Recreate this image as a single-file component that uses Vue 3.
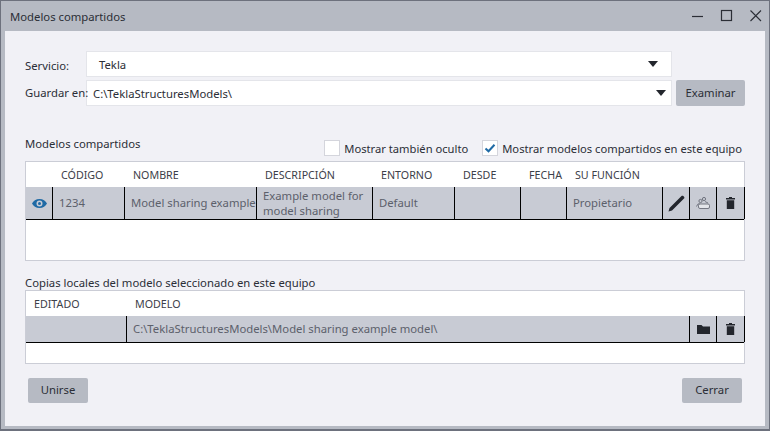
<script setup>
const columns = [
  { label: '', width: 27 },
  { label: 'CÓDIGO', width: 72 },
  { label: 'NOMBRE', width: 132 },
  { label: 'DESCRIPCIÓN', width: 116 },
  { label: 'ENTORNO', width: 82 },
  { label: 'DESDE', width: 66 },
  { label: 'FECHA', width: 46 },
  { label: 'SU FUNCIÓN', width: 96 },
  { label: '', width: 27 },
  { label: '', width: 27 },
  { label: '', width: 28 },
]
</script>

<template>
  <div class="window">
    <header class="titlebar">
      <span class="title">Modelos compartidos</span>
      <div class="controls">
        <svg width="14" height="14" viewBox="0 0 14 14"><path d="M1 7.500h11" stroke="#2b2e36" stroke-width="1.200" fill="none" /></svg>
        <svg width="14" height="14" viewBox="0 0 14 14"><rect x="1.500" y="1.500" width="10" height="10" stroke="#2b2e36" stroke-width="1.200" fill="none" /></svg>
        <svg width="14" height="14" viewBox="0 0 14 14"><path d="M1.500 1.500l10.500 10.500M12 1.500L1.500 12" stroke="#2b2e36" stroke-width="1.100" fill="none" /></svg>
      </div>
    </header>

    <main class="body">
      <div class="form-row first">
        <label>Servicio:</label>
        <div class="select service"><span>Tekla</span><i class="caret"></i></div>
      </div>
      <div class="form-row second">
        <label>Guardar en:</label>
        <div class="select path"><span>C:\TeklaStructuresModels\</span><i class="caret"></i></div>
        <button class="btn browse">Examinar</button>
      </div>

      <div class="section-head">
        <span class="section-title">Modelos compartidos</span>
        <div class="checks">
          <span class="check"><i class="box"></i>Mostrar también oculto</span>
          <span class="check">
            <i class="box">
              <svg width="14" height="14" viewBox="0 0 14 14"><path d="M2.500 7.500l3 2.800L11.500 3.800" stroke="#1f6aa5" stroke-width="2" fill="none" /></svg>
            </i>Mostrar modelos compartidos en este equipo
          </span>
        </div>
      </div>

      <section class="table shared">
        <div class="thead">
          <span v-for="(c, i) in columns" :key="i" class="th" :style="{ width: c.width + 'px' }">{{ c.label }}</span>
        </div>
        <div class="tr">
          <span class="td icon w27">
            <svg width="15" height="9" viewBox="0 0 15 9">
              <path fill-rule="evenodd" d="M7.500 0C11 0 13.700 2.100 15 4.500 13.700 6.900 11 9 7.500 9S1.300 6.900 0 4.500C1.300 2.100 4 0 7.500 0ZM7.500 1.500a3 3 0 1 0 0 6 3 3 0 0 0 0-6ZM7.500 3a1.500 1.500 0 1 1 0 3 1.500 1.500 0 0 1 0-3Z" fill="#1f6aa5" />
            </svg>
          </span>
          <span class="td w72 raised">1234</span>
          <span class="td w132 raised">Model sharing example</span>
          <span class="td w116 desc">Example model for model sharing</span>
          <span class="td w82 raised">Default</span>
          <span class="td w66"></span>
          <span class="td w46"></span>
          <span class="td w96 raised">Propietario</span>
          <span class="td icon w27">
            <svg width="17" height="17" viewBox="0 0 17 17">
              <path d="M0.500 16.500L1.500 13 13.500 1C14 0.500 14.800 0.500 15.300 1L16 1.700C16.500 2.200 16.500 3 16 3.500L4 15.500Z" fill="#23262d" />
            </svg>
          </span>
          <span class="td icon w27">
            <svg width="14" height="12" viewBox="0 0 14 12">
              <circle cx="4.500" cy="4" r="1.600" stroke="#5c606b" stroke-width="0.800" fill="none" />
              <circle cx="8" cy="2" r="1.600" stroke="#5c606b" stroke-width="0.800" fill="none" />
              <path d="M0.500 9.500Q1.500 6.500 3.500 6.500M9 4.500L12 6" stroke="#5c606b" stroke-width="0.800" fill="none" />
              <rect x="2.500" y="7" width="11" height="4.500" rx="1.500" stroke="#5c606b" stroke-width="0.800" fill="#e3e5ea" />
            </svg>
          </span>
          <span class="td icon w28 last">
            <svg width="9" height="12" viewBox="0 0 9 12">
              <path d="M3 0h3v1h3v1.500H0V1h3ZM0.800 3.300h7.400V12H0.800Z" fill="#23262d" />
            </svg>
          </span>
        </div>
      </section>

      <div class="section-title local-title">Copias locales del modelo seleccionado en este equipo</div>

      <section class="table local">
        <div class="thead short">
          <span class="th w101">EDITADO</span>
          <span class="th">MODELO</span>
        </div>
        <div class="tr short-row">
          <span class="td w101"></span>
          <span class="td w563 raised">C:\TeklaStructuresModels\Model sharing example model\</span>
          <span class="td icon w27">
            <svg width="13" height="9" viewBox="0 0 13 9">
              <path d="M0 0h4.500L6 1.500h7V9H0Z" fill="#23262d" />
            </svg>
          </span>
          <span class="td icon w28 last">
            <svg width="9" height="12" viewBox="0 0 9 12">
              <path d="M3 0h3v1h3v1.500H0V1h3ZM0.800 3.300h7.400V12H0.800Z" fill="#23262d" />
            </svg>
          </span>
        </div>
      </section>

      <footer class="footer">
        <button class="btn action">Unirse</button>
        <button class="btn action">Cerrar</button>
      </footer>
    </main>
  </div>
</template>

<style>
html, body { margin: 0; background: #b6bac3; }
</style>

<style scoped>
.window {
  box-sizing: border-box;
  width: 770px;
  height: 431px;
  background: #b6bac3;
  border: 1px solid #6d717d;
  border-width: 1px 1px 2px 1px;
  font-family: "Noto Sans", "Open Sans", sans-serif;
  font-size: 11.300px;
  color: #2b2e36;
  padding: 0 4px 3px 4px;
  display: flex;
  flex-direction: column;
}
.titlebar {
  height: 30px;
  flex: none;
  display: flex;
  align-items: center;
  justify-content: space-between;
}
.title { padding-left: 5px; }
.controls { display: flex; gap: 15px; padding-right: 2px; }
.body {
  flex: 1;
  background: #f1f1f6;
  padding: 20px 20px 0 20px;
  min-height: 0;
}
.form-row { display: flex; align-items: center; }
.form-row label { width: 61px; flex: none; white-space: nowrap; }
.first label { position: relative; top: 1px; }
.second label { position: relative; top: -1px; }
.second { margin-top: 3px; }
.select {
  box-sizing: border-box;
  width: 586px;
  height: 26px;
  background: #fff;
  border: 1px solid #e4e5ea;
  display: flex;
  align-items: center;
  justify-content: space-between;
}
.service { padding: 0 13px 0 12px; }
.path { padding: 0 5px 0 6px; }
.caret {
  width: 0;
  height: 0;
  border-left: 5px solid transparent;
  border-right: 5px solid transparent;
  border-top: 6px solid #23262d;
}
.btn {
  font: inherit;
  color: inherit;
  background: #b6bac3;
  border: none;
  border-radius: 2px;
  padding: 0 0 2px;
}
.browse { width: 69px; height: 26px; margin-left: 4px; }
.section-head {
  display: flex;
  justify-content: space-between;
  margin-top: 33px;
  height: 22px;
}
.section-title { line-height: 16px; }
.section-head .section-title { margin-top: -3px; }
.checks { display: flex; gap: 14px; padding-right: 3px; padding-top: 1px; font-size: 11.200px; }
.check { display: flex; align-items: center; gap: 4px; height: 16px; }
.box {
  box-sizing: border-box;
  width: 16px;
  height: 16px;
  background: #fff;
  border: 1px solid #d4d5dc;
  display: flex;
  align-items: center;
  justify-content: center;
}
.table {
  box-sizing: border-box;
  width: 720px;
  background: #fff;
  border: 1px solid #cbcdd6;
}
.shared { height: 100px; }
.local { height: 74px; }
.thead {
  height: 25px;
  display: flex;
  align-items: center;
  font-size: 10.700px;
  color: #3c4049;
}
.th { flex: none; box-sizing: border-box; padding-left: 8px; white-space: nowrap; }
.tr {
  display: flex;
  height: 33px;
  box-sizing: border-box;
  background: #c8cbd4;
  border-bottom: 1px solid #000;
  color: #5c606b;
  width: 718px;
}
.short-row { height: 27px; }
.td {
  flex: none;
  box-sizing: border-box;
  display: flex;
  align-items: center;
  padding-left: 6px;
  border-right: 1px solid #000;
  white-space: nowrap;
}
.raised { padding-bottom: 2px; }
.desc { white-space: normal; line-height: 15px; }
.icon { justify-content: center; padding: 0; }
.w27 { width: 27px; }
.w28 { width: 28px; }
.w46 { width: 46px; }
.w66 { width: 66px; }
.w72 { width: 72px; }
.w82 { width: 82px; }
.w96 { width: 96px; }
.w101 { width: 101px; }
.w116 { width: 116px; }
.w132 { width: 132px; }
.w563 { width: 563px; }
.local-title { margin-top: 14px; height: 15px; line-height: 15px; }
.footer {
  display: flex;
  justify-content: space-between;
  padding: 14px 3px 0 3px;
}
.action { width: 60px; height: 25px; }
</style>
